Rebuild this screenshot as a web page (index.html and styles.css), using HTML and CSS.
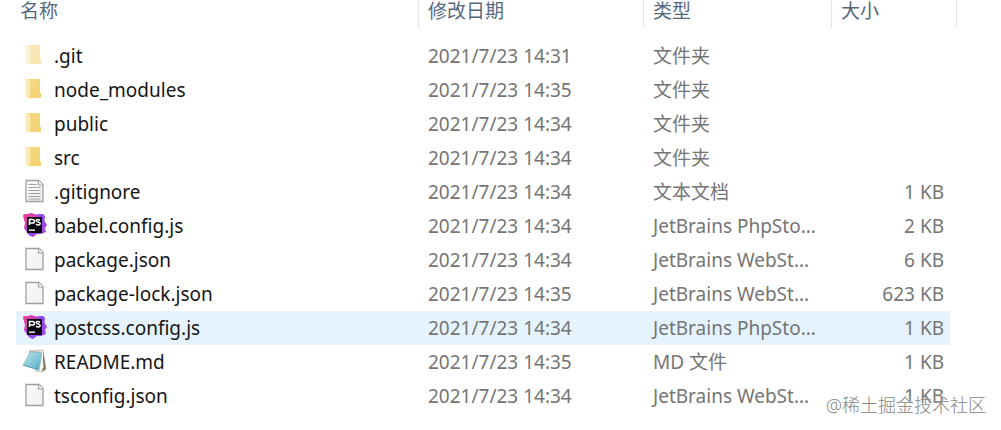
FILE: index.html
```html
<!DOCTYPE html>
<html lang="zh-CN">
<head>
<meta charset="utf-8">
<title>文件列表</title>
<link rel="stylesheet" href="styles.css">
</head>
<body>
<svg class="defs" aria-hidden="true">
  <defs>
    <linearGradient id="gold" x1="0" y1="0" x2="1" y2="1"><stop offset="0" stop-color="#f8dc85"/><stop offset="1" stop-color="#f3cf70"/></linearGradient>
    <linearGradient id="splash" x1="0" y1="0" x2="1" y2="1"><stop offset="0" stop-color="#f03a96"/><stop offset=".3" stop-color="#d640b4"/><stop offset=".5" stop-color="#9a45ee"/><stop offset="1" stop-color="#9b55e8"/></linearGradient>
    <linearGradient id="cover" x1="0" y1="0" x2="1" y2="1"><stop offset="0" stop-color="#b5e3ea"/><stop offset=".6" stop-color="#7fc5d5"/><stop offset="1" stop-color="#4d9fb4"/></linearGradient>
    <linearGradient id="paper" x1="0" y1="0" x2="1" y2="1"><stop offset="0" stop-color="#fbfbfb"/><stop offset="1" stop-color="#f0f0f0"/></linearGradient>
    <symbol id="folder" viewBox="0 0 26 26">
      <path d="M5 3h13v14h1v5H5z" fill="url(#gold)"/>
      <path d="M4 3l5 2v14l-2 4-3-2z" fill="#fdeab2"/>
      <path d="M9 5v14l-1 3" fill="none" stroke="#edca70" stroke-width=".7"/>
    </symbol>
    <symbol id="file" viewBox="0 0 26 26">
      <path d="M4 2.500h13l4 4v17H4z" fill="url(#paper)" stroke="#a0a0a0" stroke-width="1.300"/>
      <path d="M16.500 2.500V7H21" fill="#fff" stroke="#a0a0a0" stroke-width="1.200"/>
    </symbol>
    <symbol id="text" viewBox="0 0 26 26">
      <use href="#file"/>
      <path d="M6.500 6.500h8M6.500 9.500h12M6.500 12.500h12M6.500 15.500h12M6.500 18.500h12M6.500 21h12" stroke="#a0a0a0" stroke-width="1.200"/>
    </symbol>
    <symbol id="storm" viewBox="0 0 26 26">
      <path d="M1 4q0-2 2-2l3 0 3-1 5 1.500 5-.5q3 0 4 2l-1 4 3 5-2 3 1 4-5 2-4 0-4 3q-4-1-5-3l-2-3-2-3 1-5z" fill="url(#splash)"/>
      <path d="M15 3l6-1 2 3-1 5-3-5z" fill="#8550f5"/>
      <path d="M5 5h15v16H5z" fill="#0c0810"/>
      <path d="M7.500 13V7.500h3q2 0 2 1.800t-2 1.800h-3M18 8.200q-3.500-1.500-3.800.3c0 2 4 1 4 3 0 1.900-3 1.700-4.200.6" fill="none" stroke="#fff" stroke-width="1.500"/>
      <path d="M7 18.200h6" stroke="#fff" stroke-width="1.400"/>
    </symbol>
    <symbol id="note" viewBox="0 0 26 26">
      <path d="M7 3l14-1 3 19-4 3-6-1z" fill="#f2efe9" stroke="#b1aaa0" stroke-width=".7"/>
      <path d="M21 3l3 18-4 3 1-7z" fill="#8a7c64"/>
      <path d="M20 6l1.500 13-3 4z" fill="#fffdf8"/>
      <path d="M8 4l12 1-3 17L1 17z" fill="url(#cover)" stroke="#8fc3ce" stroke-width=".6"/>
      <path d="M8 3.500l12 1" stroke="#8b979c" stroke-width="1.300" stroke-dasharray="1.300 1"/>
      <path d="M1 17l16 5" stroke="#4f8da0" stroke-width=".8"/>
    </symbol>
  </defs>
</svg>
<main class="explorer">
  <table class="files">
    <colgroup><col><col class="col-date"><col class="col-type"><col class="col-size"><col class="col-end"></colgroup>
    <thead>
      <tr><th scope="col"><div class="head">名称</div></th><th scope="col"><div class="head split">修改日期</div></th><th scope="col"><div class="head split">类型</div></th><th scope="col"><div class="head split">大小</div></th><td><div class="head end"></div></td></tr>
    </thead>
    <tbody>
      <tr><td><div class="name"><svg class="icon faded"><use href="#folder"/></svg>.git</div></td><td>2021/7/23 14:31</td><td>文件夹</td><td></td><td></td></tr>
      <tr><td><div class="name"><svg class="icon"><use href="#folder"/></svg>node_modules</div></td><td>2021/7/23 14:35</td><td>文件夹</td><td></td><td></td></tr>
      <tr><td><div class="name"><svg class="icon"><use href="#folder"/></svg>public</div></td><td>2021/7/23 14:34</td><td>文件夹</td><td></td><td></td></tr>
      <tr><td><div class="name"><svg class="icon"><use href="#folder"/></svg>src</div></td><td>2021/7/23 14:34</td><td>文件夹</td><td></td><td></td></tr>
      <tr><td><div class="name"><svg class="icon"><use href="#text"/></svg>.gitignore</div></td><td>2021/7/23 14:34</td><td>文本文档</td><td class="size">1 KB</td><td></td></tr>
      <tr><td><div class="name"><svg class="icon"><use href="#storm"/></svg>babel.config.js</div></td><td>2021/7/23 14:34</td><td>JetBrains PhpSto...</td><td class="size">2 KB</td><td></td></tr>
      <tr><td><div class="name"><svg class="icon"><use href="#file"/></svg>package.json</div></td><td>2021/7/23 14:34</td><td>JetBrains WebSt...</td><td class="size">6 KB</td><td></td></tr>
      <tr><td><div class="name"><svg class="icon"><use href="#file"/></svg>package-lock.json</div></td><td>2021/7/23 14:35</td><td>JetBrains WebSt...</td><td class="size">623 KB</td><td></td></tr>
      <tr class="active"><td><div class="name"><svg class="icon"><use href="#storm"/></svg>postcss.config.js</div></td><td>2021/7/23 14:34</td><td>JetBrains PhpSto...</td><td class="size">1 KB</td><td></td></tr>
      <tr><td><div class="name"><svg class="icon"><use href="#note"/></svg>README.md</div></td><td>2021/7/23 14:35</td><td>MD 文件</td><td class="size">1 KB</td><td></td></tr>
      <tr><td><div class="name"><svg class="icon"><use href="#file"/></svg>tsconfig.json</div></td><td>2021/7/23 14:34</td><td>JetBrains WebSt...</td><td class="size">1 KB</td><td></td></tr>
    </tbody>
  </table>
  <div class="watermark">@稀土掘金技术社区</div>
</main>
</body>
</html>
```
FILE: styles.css
```css
body {
  margin: 0;
  background: #fff;
  font-family: "Noto Sans", "Noto Sans CJK SC", sans-serif;
  font-size: 19px;
  color: #757575;
}

.defs {
  position: absolute;
  width: 0;
  height: 0;
}

.explorer {
  position: relative;
  padding: 0 44px 16px 16px;
}

.files {
  width: 100%;
  table-layout: fixed;
  border-collapse: collapse;
}

.col-date { width: 225px; }
.col-type { width: 188px; }
.col-size { width: 119px; }
.col-end { width: 7px; }

th,
td {
  padding: 0;
  text-align: left;
  font-weight: 400;
  white-space: nowrap;
}

thead th,
thead td {
  padding-bottom: 11px;
}

.head {
  box-sizing: border-box;
  height: 28px;
  padding-left: 4px;
  line-height: 22px;
  color: #566880;
}

.split {
  padding-left: 9px;
  border-left: 1px solid #e5e5e5;
}

.end {
  border-right: 1px solid #e5e5e5;
}

tbody td {
  height: 34px;
  padding-left: 10px;
  line-height: 34px;
}

tbody td:first-child {
  padding-left: 6px;
}

tbody td:last-child {
  padding: 0;
}

tbody .size {
  padding: 0 6px 0 0;
  text-align: right;
}

.active td:not(:last-child) {
  background: #e5f3ff;
}

.name {
  display: flex;
  align-items: center;
  gap: 6px;
  height: 34px;
  color: #151515;
}

.icon {
  flex: none;
  width: 26px;
  height: 26px;
  margin-bottom: 3px;
}

.faded {
  opacity: 0.55;
}

.watermark {
  position: absolute;
  right: 15px;
  bottom: 12px;
  font-size: 18px;
  font-weight: 300;
  line-height: 24px;
  color: #858585;
  text-shadow: 0 0 2px #fff;
}
```
